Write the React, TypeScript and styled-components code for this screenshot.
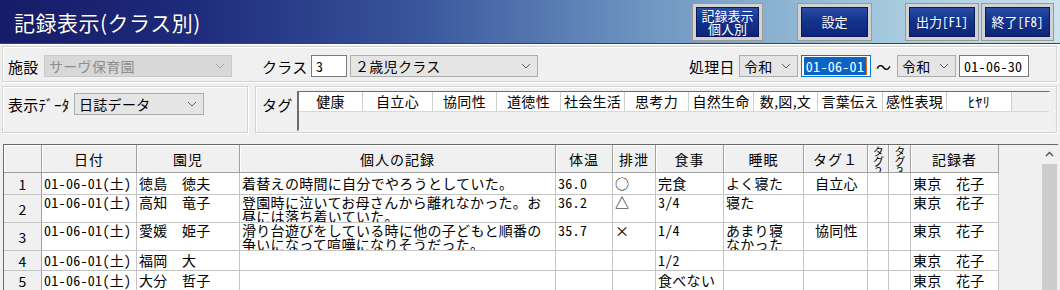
import styled, { createGlobalStyle } from 'styled-components';

const GlobalStyle = createGlobalStyle`
  html, body {
    margin: 0;
    padding: 0;
    background: #f0f0f0;
  }
  body {
    font-family: "Noto Sans CJK JP", "Noto Sans", sans-serif;
    color: #000;
    overflow: hidden;
  }
`;

const Page = styled.div`
  width: 1060px;
  height: 290px;
  display: flex;
  flex-direction: column;
  overflow: hidden;
  letter-spacing: 0.3px;
`;

const TitleBar = styled.header`
  flex: none;
  height: 43px;
  display: flex;
  align-items: center;
  justify-content: space-between;
  background: linear-gradient(90deg, #161c69 0%, #1e2a7b 18%, #3a579d 40%, #6c92c0 60%, #9bc2d9 80%, #cbe3ec 100%);
  border-bottom: 1px solid #3b4150;
  box-shadow: 0 1px 0 #ffffff;
`;

const Title = styled.h1`
  margin: 0 0 0 14px;
  font-size: 21px;
  font-weight: 400;
  color: #fff;
  letter-spacing: 0.5px;
  text-shadow: 0 0 1px rgba(0, 0, 0, 0.6);
`;

const ButtonBar = styled.div`
  display: flex;
  align-items: center;
  padding-right: 7px;
`;

const NavButton = styled.button<{ $w: number; $gap: number }>`
  width: ${p => p.$w}px;
  height: 36px;
  margin-left: ${p => p.$gap}px;
  box-sizing: border-box;
  padding: 0;
  border: 3px solid #d2d2d2;
  box-shadow: 0 0 0 1px #9a9a9a, inset 0 0 0 1px #0a1a5c;
  background: linear-gradient(180deg, #2a4ea8 0%, #14348c 45%, #0c2479 100%);
  color: #fff;
  font-family: inherit;
  font-size: 13px;
  line-height: 13px;
  white-space: pre-line;
  cursor: pointer;
`;

// half-width latin glyphs, like the fixed-pitch font of the original
const Half = styled.span`
  font-feature-settings: "hwid";
`;

const Panel = styled.div<{ $h: number; $mt: number }>`
  flex: none;
  height: ${p => p.$h}px;
  margin: ${p => p.$mt}px 3px 0 2px;
  box-sizing: border-box;
  border: 1px solid #d3d3d3;
  box-shadow: inset 1px 1px 0 #fff, 1px 1px 0 #fff;
  display: flex;
  align-items: center;
  padding: 4px 0 0 5px;
`;

const PanelRow = styled.div`
  flex: none;
  height: 47px;
  margin: 4px 3px 0 2px;
  display: flex;
  gap: 7px;
`;

const Box = styled.div<{ $w?: number; $pl: number; $pt: number }>`
  ${p => (p.$w ? `width: ${p.$w}px;` : 'flex: 1;')}
  box-sizing: border-box;
  border: 1px solid #d3d3d3;
  box-shadow: inset 1px 1px 0 #fff, 1px 1px 0 #fff;
  display: flex;
  align-items: flex-start;
  padding: ${p => p.$pt}px 0 0 ${p => p.$pl}px;
`;

const Label = styled.span<{ $w: number; $ml?: number; $h?: number }>`
  flex: none;
  width: ${p => p.$w}px;
  margin-left: ${p => p.$ml || 0}px;
  height: ${p => p.$h || 22}px;
  display: flex;
  align-items: center;
  font-size: 15px;
  white-space: nowrap;
`;

const Select = styled.div<{ $w: number; $ml?: number; $disabled?: boolean }>`
  flex: none;
  width: ${p => p.$w}px;
  height: 22px;
  margin-left: ${p => p.$ml || 0}px;
  box-sizing: border-box;
  border: 1px solid ${p => (p.$disabled ? '#c9c9c9' : '#adadad')};
  background: ${p => (p.$disabled ? '#d8d8d8' : '#e5e5e5')};
  color: ${p => (p.$disabled ? '#8e8e8e' : '#000')};
  display: flex;
  align-items: center;
  padding-left: 4px;
  font-size: 14px;
  white-space: nowrap;
  svg {
    margin-left: auto;
    margin-right: 6px;
  }
`;

const TextBox = styled.div<{ $w: number; $ml?: number; $focused?: boolean }>`
  flex: none;
  width: ${p => p.$w}px;
  height: 22px;
  margin-left: ${p => p.$ml || 0}px;
  box-sizing: border-box;
  border: 1px solid ${p => (p.$focused ? '#0078d7' : '#7a7a7a')};
  background: #fff;
  display: flex;
  align-items: center;
  padding: ${p => (p.$focused ? '1px 3px 1px 2px' : '0 0 0 4px')};
  font-size: 14px;
  white-space: nowrap;
  overflow: hidden;
`;

const Selection = styled.span`
  height: 100%;
  flex: 1;
  display: flex;
  align-items: center;
  justify-content: center;
  background: #0a64c8;
  color: #fff;
  border-right: 1px solid #e07020;
`;

const Tilde = styled.span`
  flex: none;
  width: 21px;
  margin-left: 5px;
  font-size: 15px;
  text-align: left;
`;

const TagGrid = styled.div`
  width: 753px;
  height: 40px;
  box-sizing: border-box;
  border-style: solid;
  border-width: 1px 1px 1px 2px;
  border-color: #6d6d6d #f7f7f7 #f7f7f7 #6d6d6d;
  background: #f0f0f0;
  display: flex;
  flex-direction: column;
`;

const TagRow = styled.div`
  display: flex;
  height: 19px;
  border-bottom: 1px solid #d8d8d8;
`;

const TagCell = styled.div<{ $w: number }>`
  width: ${p => p.$w}px;
  box-sizing: border-box;
  background: #fff;
  border-right: 1px solid #cfcfcf;
  font-size: 14px;
  line-height: 19px;
  text-align: center;
  white-space: nowrap;
  overflow: hidden;
`;

const GridFrame = styled.div`
  flex: 1;
  margin: 11px 2px 0 3px;
  border-top: 1px solid #6a6a6a;
  border-left: 1px solid #6a6a6a;
  display: flex;
  min-height: 0;
  overflow: hidden;
`;

const GridArea = styled.div`
  flex: 1;
  background: #f0f0f0;
  overflow: hidden;
`;

const Sheet = styled.div<{ $cols: string; $rows: string }>`
  display: grid;
  grid-template-columns: ${p => p.$cols};
  grid-template-rows: ${p => p.$rows};
  width: max-content;
`;

const HeadCell = styled.div`
  box-sizing: border-box;
  background: #f0f0f0;
  border-right: 1px solid #a0a0a0;
  border-bottom: 1px solid #a0a0a0;
  box-shadow: inset 1px 1px 0 #fff;
  display: flex;
  align-items: center;
  justify-content: center;
  font-size: 14px;
  letter-spacing: 1px;
  overflow: hidden;
`;

const VerticalHead = styled(HeadCell)`
  align-items: flex-start;
  span {
    writing-mode: vertical-rl;
    text-orientation: upright;
    white-space: nowrap;
    font-size: 11px;
    line-height: 11px;
    letter-spacing: -1px;
    margin-top: 1px;
  }
`;

const RowHead = styled.div`
  box-sizing: border-box;
  background: #f0f0f0;
  border-right: 1px solid #a0a0a0;
  border-bottom: 1px solid #c4c4c4;
  display: flex;
  align-items: center;
  justify-content: center;
  font-size: 14px;
`;

const Cell = styled.div<{ $pad: number; $indent?: number }>`
  box-sizing: border-box;
  background: #fff;
  border-right: 1px solid #c4c4c4;
  border-bottom: 1px solid #c4c4c4;
  padding: ${p => p.$pad}px 0 0 ${p => p.$indent || 2}px;
  font-size: 14px;
  line-height: 14px;
  white-space: pre;
  overflow: hidden;
`;

const ScrollBar = styled.div`
  flex: none;
  width: 18px;
  background: #f0f0f0;
  display: flex;
  flex-direction: column;
  align-items: center;
`;

const ArrowButton = styled.div`
  height: 17px;
  width: 100%;
  display: flex;
  align-items: center;
  justify-content: center;
`;

const Thumb = styled.div`
  flex: 1;
  width: 15px;
  margin-top: 2px;
  background: #cdcdcd;
`;

const Chevron = ({ disabled }: { disabled?: boolean }) => (
  <svg width="10" height="6" viewBox="0 0 10 6">
    <polyline points="1,1 5,5 9,1" fill="none" stroke={disabled ? '#a8a8a8' : '#606060'} strokeWidth="1" />
  </svg>
);

const tags = [
  { w: 64, t: '健康' },
  { w: 70, t: '自立心' },
  { w: 64, t: '協同性' },
  { w: 64, t: '道徳性' },
  { w: 64, t: '社会生活' },
  { w: 64, t: '思考力' },
  { w: 65, t: '自然生命' },
  { w: 64, t: '数,図,文' },
  { w: 65, t: '言葉伝え' },
  { w: 64, t: '感性表現' },
  { w: 65, t: 'ﾋﾔﾘ' },
];

const columns = [38, 95, 103, 316, 57, 43, 68, 80, 64, 21, 22, 88];

type Rec = {
  h: number;
  child: string;
  note: string;
  temp: string;
  toilet: string;
  meal: string;
  sleep: string;
  tag1: string;
};

const records: Rec[] = [
  { h: 22, child: '徳島　徳夫', note: '着替えの時間に自分でやろうとしていた。', temp: '36.0', toilet: '○', meal: '完食', sleep: 'よく寝た', tag1: '自立心' },
  { h: 28, child: '高知　竜子', note: '登園時に泣いてお母さんから離れなかった。お\n昼には落ち着いていた。', temp: '36.2', toilet: '△', meal: '3/4', sleep: '寝た', tag1: '' },
  { h: 28, child: '愛媛　姫子', note: '滑り台遊びをしている時に他の子どもと順番の\n争いになって喧嘩になりそうだった。', temp: '35.7', toilet: '×', meal: '1/4', sleep: 'あまり寝\nなかった', tag1: '協同性' },
  { h: 20, child: '福岡　大', note: '', temp: '', toilet: '', meal: '1/2', sleep: '', tag1: '' },
  { h: 20, child: '大分　哲子', note: '', temp: '', toilet: '', meal: '食べない', sleep: '', tag1: '' },
];

const isNumeric = (s: string) => /^[0-9./]+$/.test(s);

export default function App() {
  return (
    <Page>
      <GlobalStyle />
      <TitleBar>
        <Title>記録表示(クラス別)</Title>
        <ButtonBar>
          <NavButton $w={69} $gap={0}>{'記録表示\n個人別'}</NavButton>
          <NavButton $w={73} $gap={36}>設定</NavButton>
          <NavButton $w={72} $gap={35}>出力<Half>[F1]</Half></NavButton>
          <NavButton $w={71} $gap={4}>終了<Half>[F8]</Half></NavButton>
        </ButtonBar>
      </TitleBar>

      <Panel $h={36} $mt={2}>
        <Label $w={36}>施設</Label>
        <Select $w={188} $disabled>
          サーヴ保育園
          <Chevron disabled />
        </Select>
        <Label $w={49} $ml={30}>クラス</Label>
        <TextBox $w={36}><Half>3</Half></TextBox>
        <Select $w={188} $ml={3}>
          ２歳児クラス
          <Chevron />
        </Select>
        <Label $w={50} $ml={151}>処理日</Label>
        <Select $w={59}>
          令和
          <Chevron />
        </Select>
        <TextBox $w={70} $ml={3} $focused>
          <Selection><Half>01-06-01</Half></Selection>
        </TextBox>
        <Tilde>～</Tilde>
        <Select $w={59}>
          令和
          <Chevron />
        </Select>
        <TextBox $w={70} $ml={3}><Half>01-06-30</Half></TextBox>
      </Panel>

      <PanelRow>
        <Box $w={246} $pl={5} $pt={6}>
          <Label $w={66}>表示ﾃﾞｰﾀ</Label>
          <Select $w={130}>
            日誌データ
            <Chevron />
          </Select>
        </Box>
        <Box $pl={6} $pt={4}>
          <Label $w={35} $h={26}>タグ</Label>
          <TagGrid>
            <TagRow>
              {tags.map(tag => (
                <TagCell key={tag.t} $w={tag.w}>{tag.t}</TagCell>
              ))}
            </TagRow>
          </TagGrid>
        </Box>
      </PanelRow>

      <GridFrame>
        <GridArea>
          <Sheet
            $cols={columns.map(c => `${c}px`).join(' ')}
            $rows={['28px', ...records.map(r => `${r.h}px`)].join(' ')}
          >
            <HeadCell />
            <HeadCell>日付</HeadCell>
            <HeadCell>園児</HeadCell>
            <HeadCell>個人の記録</HeadCell>
            <HeadCell>体温</HeadCell>
            <HeadCell>排泄</HeadCell>
            <HeadCell>食事</HeadCell>
            <HeadCell>睡眠</HeadCell>
            <HeadCell>タグ１</HeadCell>
            <VerticalHead><span>タグ２</span></VerticalHead>
            <VerticalHead><span>タグ３</span></VerticalHead>
            <HeadCell>記録者</HeadCell>
            {records.map((r, i) => {
              const lines = Math.max(...[r.note, r.sleep].map(s => s.split('\n').length));
              const pad = Math.max(0, Math.floor((r.h - 1 - lines * 14) / 2));
              return [
                <RowHead key={`n${i}`}>{i + 1}</RowHead>,
                <Cell key={`d${i}`} $pad={pad}><Half>01-06-01(</Half>土<Half>)</Half></Cell>,
                <Cell key={`c${i}`} $pad={pad}>{r.child}</Cell>,
                <Cell key={`m${i}`} $pad={pad}>{r.note}</Cell>,
                <Cell key={`t${i}`} $pad={pad}><Half>{r.temp}</Half></Cell>,
                <Cell key={`e${i}`} $pad={pad}>{r.toilet}</Cell>,
                <Cell key={`f${i}`} $pad={pad}>
                  {isNumeric(r.meal) ? <Half>{r.meal}</Half> : r.meal}
                </Cell>,
                <Cell key={`s${i}`} $pad={pad}>{r.sleep}</Cell>,
                <Cell key={`g${i}`} $pad={pad} $indent={11}>{r.tag1}</Cell>,
                <Cell key={`h${i}`} $pad={pad} />,
                <Cell key={`k${i}`} $pad={pad} />,
                <Cell key={`w${i}`} $pad={pad}>東京　花子</Cell>,
              ];
            })}
          </Sheet>
        </GridArea>
        <ScrollBar>
          <ArrowButton>
            <svg width="9" height="6" viewBox="0 0 9 6">
              <polyline points="1,5 4.5,1.5 8,5" fill="none" stroke="#505050" strokeWidth="1.4" />
            </svg>
          </ArrowButton>
          <Thumb />
        </ScrollBar>
      </GridFrame>
    </Page>
  );
}
